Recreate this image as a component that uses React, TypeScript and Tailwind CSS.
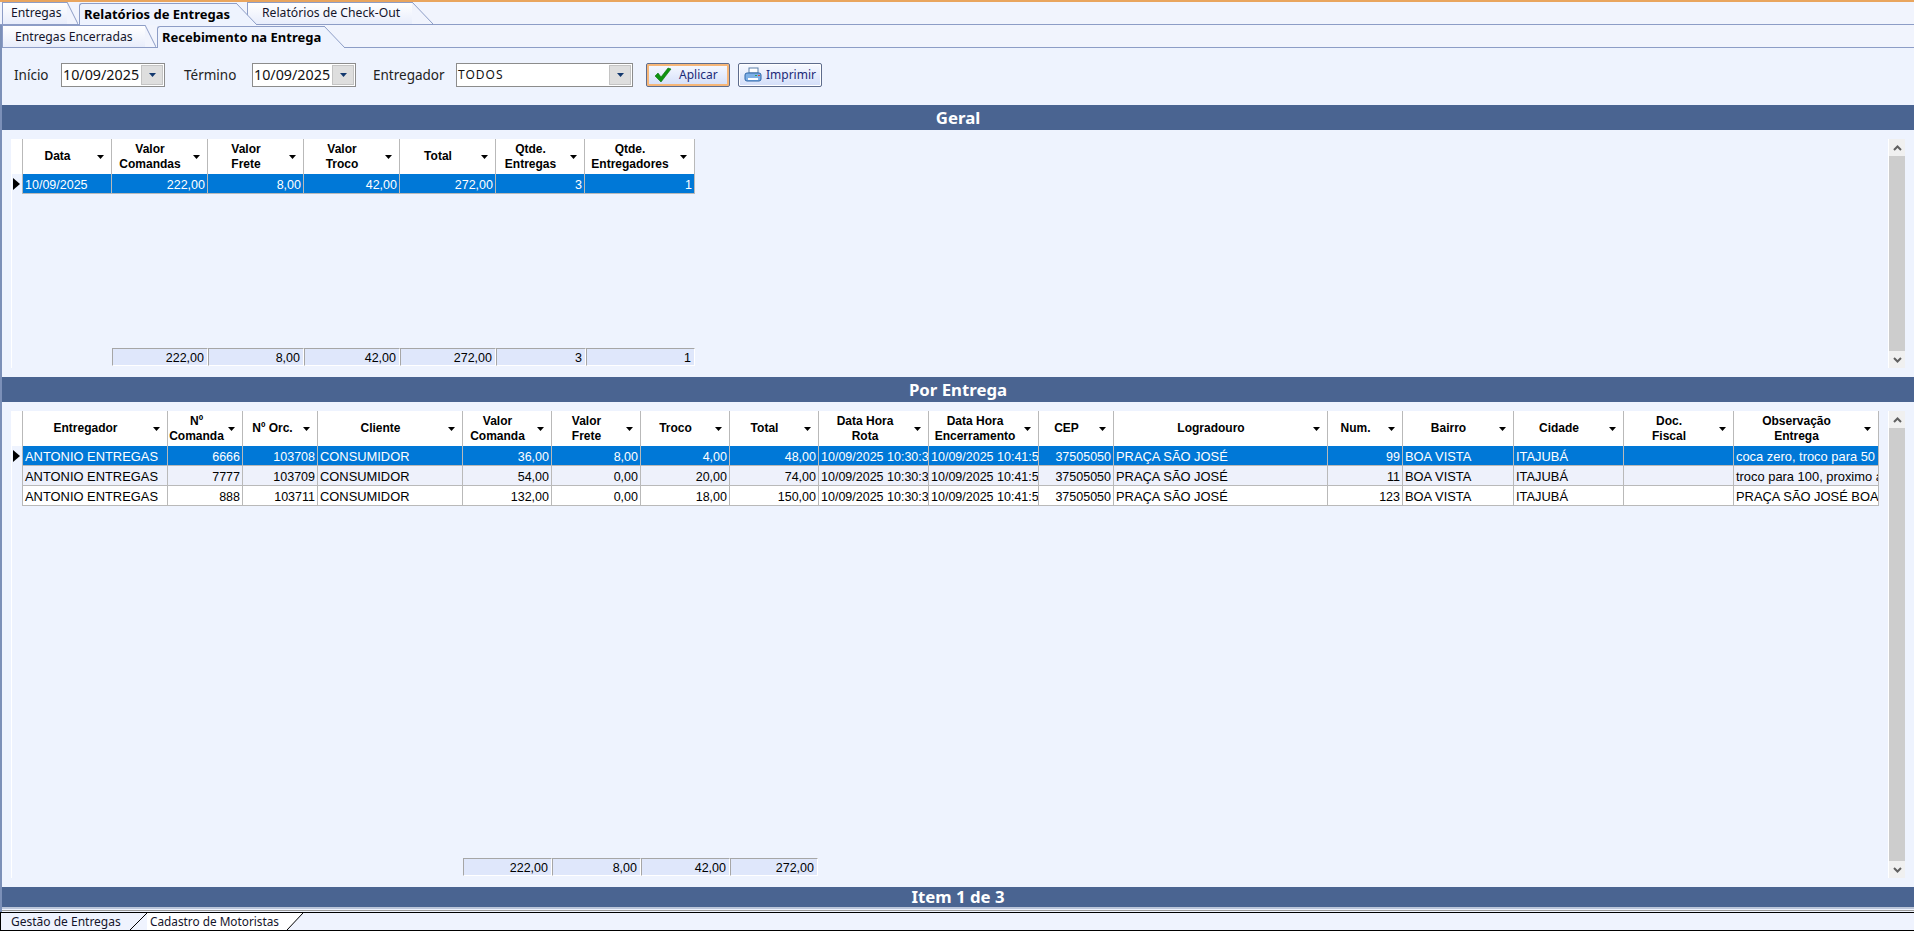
import type { ReactNode } from 'react';

const ui = "font-['Noto_Sans',sans-serif]";
const gridFont = "font-['Liberation_Sans',Arial,sans-serif]";

function Tab({
  label,
  active,
  bodyClass,
  slant,
  h,
}: {
  label: string;
  active?: boolean;
  bodyClass: string;
  slant: number;
  h: number;
}) {
  return (
    <div className={`flex shrink-0 ${active ? 'relative z-10 -mb-px' : ''}`}>
      <div
        className={`flex items-center whitespace-nowrap border-t border-l border-[#8d9dc6] ${
          active
            ? 'rounded-tl-[3px] bg-[#eef3fe] text-[13px] font-bold text-black'
            : 'bg-gradient-to-b from-white to-[#e8edfb] text-[12.2px] text-[#14142a]'
        } ${bodyClass}`}
      >
        {label}
      </div>
      <svg width={slant} height={h} className="block shrink-0">
        <polygon points={`0,0 ${slant},${h} 0,${h}`} fill={active ? '#eef3fe' : '#f1f4fd'} />
        <line x1="0" y1="0" x2={slant} y2={h} stroke="#8d9dc6" strokeWidth="1" />
      </svg>
    </div>
  );
}

function Band({ title, small }: { title: string; small?: boolean }) {
  return (
    <div
      className={`flex shrink-0 items-center justify-center bg-[#4a6491] text-[16.8px] font-bold text-white ${
        small ? 'h-[20px]' : 'h-[25px]'
      }`}
    >
      {title}
    </div>
  );
}

function Caret({ className }: { className: string }) {
  return (
    <svg width="7" height="4" viewBox="0 0 7 4" className={`block shrink-0 ${className}`}>
      <polygon points="0,0 7,0 3.5,4" />
    </svg>
  );
}

function DateField({ value }: { value: string }) {
  return (
    <div className="flex h-[24px] w-[104px] items-center justify-between border border-[#8c8c8c] bg-white pl-[1px] pr-[1px] text-[14.3px] text-[#111]">
      <span>{value}</span>
      <DropBtn />
    </div>
  );
}

function DropBtn() {
  return (
    <span className="flex h-[20px] w-[22px] items-center justify-center border border-[#c4c4c4] bg-[#dedede]">
      <Caret className="fill-[#12386e]" />
    </span>
  );
}

function Button({ children, focused, className }: { children: ReactNode; focused?: boolean; className: string }) {
  return (
    <button
      className={`flex h-[24px] items-center rounded-[2px] border border-[#5e6c8c] bg-gradient-to-b from-[#f8faff] to-[#d3def9] text-[12px] text-[#1c2a78] ${
        focused ? 'ring-2 ring-inset ring-[#f6b678]' : 'ring-1 ring-inset ring-white'
      } ${className}`}
    >
      {children}
    </button>
  );
}

function Scrollbar() {
  return (
    <div className="flex w-[17px] shrink-0 flex-col border-l border-white">
      <div className="flex h-[17px] items-center justify-center bg-[#f0f0f0]">
        <svg width="9" height="6" viewBox="0 0 9 6">
          <polyline points="1,5 4.5,1.5 8,5" fill="none" stroke="#606060" strokeWidth="2" />
        </svg>
      </div>
      <div className="flex-1 bg-[#cdcdcd]" />
      <div className="flex h-[17px] items-center justify-center bg-[#f0f0f0]">
        <svg width="9" height="6" viewBox="0 0 9 6">
          <polyline points="1,1 4.5,4.5 8,1" fill="none" stroke="#606060" strokeWidth="2" />
        </svg>
      </div>
    </div>
  );
}

type Col = { title: string; w: string; mx?: string };
type Row = { text: string; right?: boolean; caps?: boolean }[];

function HeaderCell({ col }: { col: Col }) {
  return (
    <div className={`flex h-[35px] shrink-0 items-center border-r border-[#b9b9b9] bg-white ${col.w}`}>
      <div className="min-w-0 flex-1 whitespace-pre-line text-center text-[12px] font-bold leading-[15px] text-black">
        {col.title}
      </div>
      <Caret className={`fill-black ${col.mx ?? 'mr-[7px] ml-[5px]'}`} />
    </div>
  );
}

function DataRow({ cols, cells, index }: { cols: Col[]; cells: Row; index: number }) {
  const selected = index === 0;
  const rowBg = selected ? 'bg-[#0078d7] text-white' : index === 1 ? 'bg-[#eef1fb] text-black' : 'bg-white text-black';
  return (
    <div className="flex h-[20px]">
      <div className="flex w-[11px] shrink-0 items-center justify-end border-r border-[#b9b9b9] pr-[2px]">
        {selected && (
          <svg width="7" height="12" viewBox="0 0 7 12" className="block">
            <polygon points="0,0 7,6 0,12" fill="#000" />
          </svg>
        )}
      </div>
      {cells.map((cell, i) => (
        <div
          key={i}
          className={`h-[20px] shrink-0 overflow-hidden whitespace-nowrap border-r border-b border-[#b9b9b9] px-[2px] pt-[1px] leading-[20px] ${rowBg} ${
            cell.right ? 'text-right' : 'text-left'
          } ${cell.caps ? 'text-[12.9px]' : 'text-[12.5px]'} ${cols[i].w}`}
        >
          {cell.text}
        </div>
      ))}
    </div>
  );
}

function FooterCell({ value, w }: { value: string; w: string }) {
  return (
    <div
      className={`h-[18px] shrink-0 border-t border-l border-r border-b border-t-[#a6a6a6] border-l-[#a6a6a6] border-r-white border-b-white bg-[#dfe7fb] pr-[3px] text-right text-[12.5px] leading-[18px] text-black ${w}`}
    >
      {value}
    </div>
  );
}

const geralCols: Col[] = [
  { title: 'Data', w: 'w-[89px]' },
  { title: 'Valor\nComandas', w: 'w-[96px]' },
  { title: 'Valor\nFrete', w: 'w-[96px]' },
  { title: 'Valor\nTroco', w: 'w-[96px]' },
  { title: 'Total', w: 'w-[96px]' },
  { title: 'Qtde.\nEntregas', w: 'w-[89px]' },
  { title: 'Qtde.\nEntregadores', w: 'w-[110px]' },
];

const geralRows: Row[] = [
  [
    { text: '10/09/2025' },
    { text: '222,00', right: true },
    { text: '8,00', right: true },
    { text: '42,00', right: true },
    { text: '272,00', right: true },
    { text: '3', right: true },
    { text: '1', right: true },
  ],
];

const entregaCols: Col[] = [
  { title: 'Entregador', w: 'w-[145px]' },
  { title: 'Nº\nComanda', w: 'w-[75px]', mx: 'mr-[7px] ml-[3px]' },
  { title: 'Nº Orc.', w: 'w-[75px]', mx: 'mr-[7px] ml-[1px]' },
  { title: 'Cliente', w: 'w-[145px]' },
  { title: 'Valor\nComanda', w: 'w-[89px]' },
  { title: 'Valor\nFrete', w: 'w-[89px]' },
  { title: 'Troco', w: 'w-[89px]' },
  { title: 'Total', w: 'w-[89px]' },
  { title: 'Data Hora\nRota', w: 'w-[110px]', mx: 'mr-[7px] ml-[3px]' },
  { title: 'Data Hora\nEncerramento', w: 'w-[110px]', mx: 'mr-[7px] ml-[3px]' },
  { title: 'CEP', w: 'w-[75px]' },
  { title: 'Logradouro', w: 'w-[214px]' },
  { title: 'Num.', w: 'w-[75px]' },
  { title: 'Bairro', w: 'w-[111px]' },
  { title: 'Cidade', w: 'w-[110px]' },
  { title: 'Doc.\nFiscal', w: 'w-[110px]' },
  { title: 'Observação\nEntrega', w: 'w-[145px]' },
];

const makeRow = (
  comanda: string,
  orc: string,
  vc: string,
  vf: string,
  troco: string,
  total: string,
  num: string,
  obs: string,
): Row => [
  { text: 'ANTONIO ENTREGAS', caps: true },
  { text: comanda, right: true },
  { text: orc, right: true },
  { text: 'CONSUMIDOR', caps: true },
  { text: vc, right: true },
  { text: vf, right: true },
  { text: troco, right: true },
  { text: total, right: true },
  { text: '10/09/2025 10:30:34' },
  { text: '10/09/2025 10:41:58' },
  { text: '37505050', right: true },
  { text: 'PRAÇA SÃO JOSÉ', caps: true },
  { text: num, right: true },
  { text: 'BOA VISTA', caps: true },
  { text: 'ITAJUBÁ', caps: true },
  { text: '' },
  { text: obs, caps: true },
];

const entregaRows: Row[] = [
  makeRow('6666', '103708', '36,00', '8,00', '4,00', '48,00', '99', 'coca zero, troco para 50'),
  makeRow('7777', '103709', '54,00', '0,00', '20,00', '74,00', '11', 'troco para 100, proximo a'),
  makeRow('888', '103711', '132,00', '0,00', '18,00', '150,00', '123', 'PRAÇA SÃO JOSÉ BOA VISTA'),
];

function Grid({
  cols,
  rows,
  footerOffset,
  totals,
}: {
  cols: Col[];
  rows: Row[];
  footerOffset: string;
  totals: { value: string; w: string }[];
}) {
  return (
    <div className={`flex min-w-0 flex-1 flex-col border-l border-white pb-[2px] ${gridFont}`}>
      <div className="flex">
        <div className="w-[11px] shrink-0 border-r border-[#b9b9b9] bg-white" />
        {cols.map((col) => (
          <HeaderCell key={col.title} col={col} />
        ))}
      </div>
      {rows.map((cells, i) => (
        <DataRow key={i} cols={cols} cells={cells} index={i} />
      ))}
      <div className="mt-auto flex">
        <div className={`shrink-0 ${footerOffset}`} />
        {totals.map((t, i) => (
          <FooterCell key={i} value={t.value} w={t.w} />
        ))}
      </div>
    </div>
  );
}

export default function App() {
  return (
    <div className={`flex h-[931px] w-[1914px] flex-col overflow-hidden bg-[#eef3fe] ${ui}`}>
      <div className="h-[2px] shrink-0 bg-[#e9a55e]" />

      {/* abas principais */}
      <div className="flex h-[23px] shrink-0 items-end border-b border-[#8d9dc6] bg-[#f1f4fd] pl-[2px]">
        <Tab label="Entregas" bodyClass="h-[22px] w-[65px] pl-[8px]" slant={11} h={22} />
        <div className="ml-px">
          <Tab label="Relatórios de Entregas" active bodyClass="h-[22px] w-[157px] pl-[4px]" slant={21} h={22} />
        </div>
        <div className="-ml-[10px]">
          <Tab label="Relatórios de Check-Out" bodyClass="h-[22px] w-[165px] pl-[14px]" slant={21} h={22} />
        </div>
      </div>

      <div className="flex min-h-0 flex-1 flex-col border-l-2 border-[#7c90b8]">
        <div className="flex h-[23px] shrink-0 items-end border-b border-[#8d9dc6] bg-[#f1f4fd]">
          <Tab label="Entregas Encerradas" bodyClass="h-[22px] w-[143px] pl-[12px] pt-[2px]" slant={11} h={22} />
          <div className="ml-px">
            <Tab label="Recebimento na Entrega" active bodyClass="h-[22px] w-[167px] pl-[4px]" slant={21} h={22} />
          </div>
        </div>

        {/* filtros */}
        <div className="flex h-[57px] shrink-0 items-start pt-[15px] text-[13.5px] text-[#222]">
          <span className="ml-[12px] w-[47px] leading-[24px]">Início</span>
          <DateField value="10/09/2025" />
          <span className="ml-[19px] w-[68px] leading-[24px]">Término</span>
          <DateField value="10/09/2025" />
          <span className="ml-[17px] w-[83px] leading-[24px]">Entregador</span>
          <div className="flex h-[24px] w-[177px] items-center justify-between border border-[#8c8c8c] bg-white pl-[1px] pr-[1px] text-[12px] tracking-[1px] text-[#111]">
            <span>TODOS</span>
            <DropBtn />
          </div>
          <Button focused className="ml-[13px] w-[84px] pl-[7px]">
            <svg width="18" height="16" viewBox="0 0 18 16" className="block shrink-0">
              <polygon points="1,9 4,6 7,10 14,1 17,2 7,15" fill="#0e9410" stroke="#0a6e0c" strokeWidth="0.6" />
            </svg>
            <span className="ml-[7px]">Aplicar</span>
          </Button>
          <Button className="ml-[8px] w-[84px] pl-[5px]">
            <svg width="18" height="16" viewBox="0 0 18 16" className="block shrink-0">
              <rect x="5" y="1" width="9" height="5" fill="#fff" stroke="#5b7fa8" />
              <rect x="1" y="6" width="16" height="8" rx="2" fill="#7fb0e6" stroke="#2f66a8" />
              <rect x="4" y="11" width="10" height="2" fill="#fff" />
              <rect x="11" y="8" width="2" height="1" fill="#2fa84f" />
              <rect x="14" y="8" width="2" height="1" fill="#d9483b" />
            </svg>
            <span className="ml-[4px]">Imprimir</span>
          </Button>
        </div>

        <Band title="Geral" />
        <div className="mt-[9px] flex h-[229px] shrink-0 pl-[9px]">
          <Grid
            cols={geralCols}
            rows={geralRows}
            footerOffset="w-[100px]"
            totals={[
              { value: '222,00', w: 'w-[96px]' },
              { value: '8,00', w: 'w-[96px]' },
              { value: '42,00', w: 'w-[96px]' },
              { value: '272,00', w: 'w-[96px]' },
              { value: '3', w: 'w-[90px]' },
              { value: '1', w: 'w-[109px]' },
            ]}
          />
          <div className="w-[9px] shrink-0" />
          <Scrollbar />
          <div className="w-[9px] shrink-0" />
        </div>

        <div className="mt-[9px]">
          <Band title="Por Entrega" />
        </div>
        <div className="mt-[9px] flex h-[467px] shrink-0 pl-[9px]">
          <Grid
            cols={entregaCols}
            rows={entregaRows}
            footerOffset="w-[451px]"
            totals={[
              { value: '222,00', w: 'w-[89px]' },
              { value: '8,00', w: 'w-[89px]' },
              { value: '42,00', w: 'w-[89px]' },
              { value: '272,00', w: 'w-[88px]' },
            ]}
          />
          <div className="w-[9px] shrink-0" />
          <Scrollbar />
          <div className="w-[9px] shrink-0" />
        </div>

        <div className="mt-[9px]">
          <Band title="Item 1 de 3" small />
        </div>
        <div className="flex h-[5px] shrink-0 flex-col">
          <div className="h-[2px] bg-[#bcc6da]" />
          <div className="h-[1px] bg-[#eef3fe]" />
          <div className="h-[1px] bg-[#9a9a9a]" />
          <div className="h-[1px] bg-[#eef3fe]" />
        </div>
      </div>

      {/* abas de baixo */}
      <div className="flex h-[19px] shrink-0 border-y border-black bg-[#eff3fe] text-[12px] text-[#14142a]">
        <div className="flex w-[130px] items-center border-l border-black pl-[10px]">Gestão de Entregas</div>
        <svg width="17" height="17" className="block shrink-0">
          <line x1="0" y1="17" x2="17" y2="0" stroke="#000" />
        </svg>
        <div className="flex w-[140px] items-center bg-white pl-[3px] text-[11.8px]">Cadastro de Motoristas</div>
        <svg width="16" height="17" className="block shrink-0">
          <polygon points="0,0 16,0 0,17" fill="#fff" />
          <line x1="0" y1="17" x2="16" y2="0" stroke="#000" />
        </svg>
      </div>
    </div>
  );
}
